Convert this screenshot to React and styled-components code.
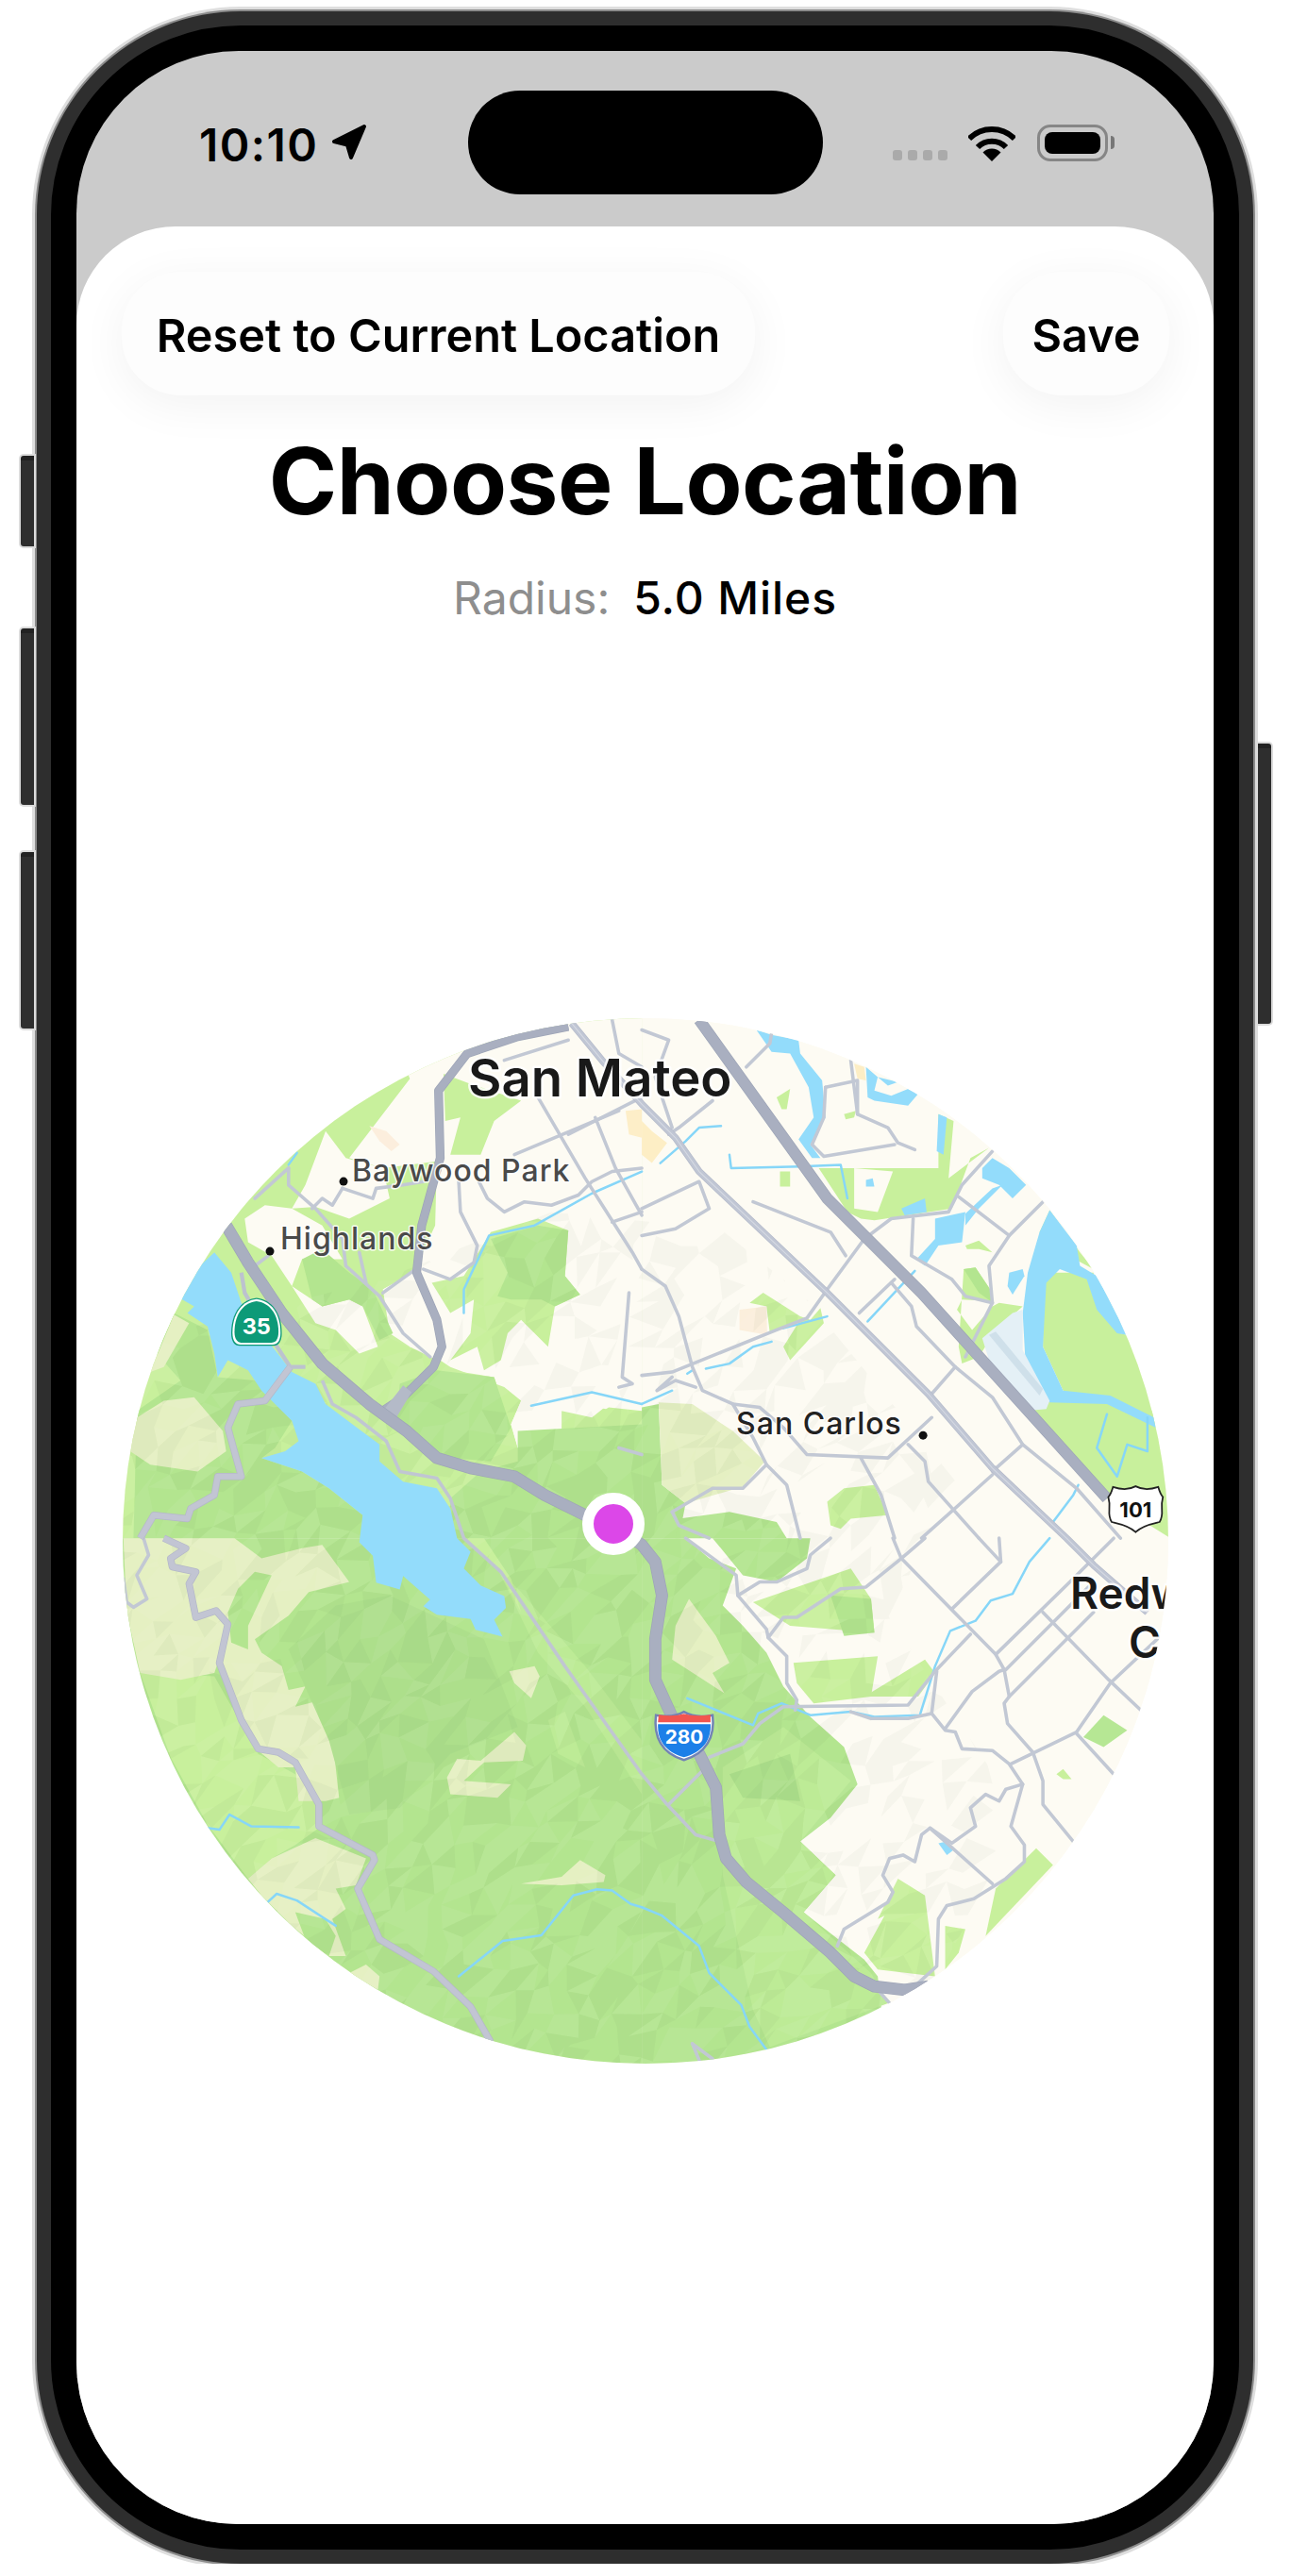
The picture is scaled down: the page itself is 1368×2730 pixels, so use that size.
import React from 'react'
import styled, { createGlobalStyle } from 'styled-components'

const GlobalStyle = createGlobalStyle`
  html, body {
    margin: 0;
    padding: 0;
    background: #fff;
    font-family: Inter, "Liberation Sans", sans-serif;
  }
`

const Device = styled.div`
  position: relative;
  width: 1289px;
  height: 2705px;
  margin: 12px 0 0 39px;
`

const Frame = styled.div`
  box-sizing: border-box;
  width: 100%;
  height: 100%;
  padding: 27px;
  background: #000;
  border: 15px solid #2e2e2e;
  border-radius: 216px;
  box-shadow: 0 0 0 2px #8c8c8c, 0 0 0 5px #dedede;
`

const SideButton = styled.div`
  position: absolute;
  top: ${p => p.$top}px;
  ${p => (p.$right ? 'right: -19px;' : 'left: -17px;')}
  width: 14px;
  height: ${p => p.$height}px;
  background: #2e2e2e;
  border-top: 5px solid #222;
  border-radius: ${p => (p.$right ? '0 3px 3px 0' : '3px 0 0 3px')};
  box-shadow: 0 0 0 2px #dcdcdc;
`

const Screen = styled.div`
  display: flex;
  flex-direction: column;
  height: 100%;
  overflow: hidden;
  background: #cbcbcb;
  border-radius: 172px;
`

const StatusBar = styled.div`
  box-sizing: border-box;
  display: grid;
  grid-template-columns: 1fr 376px 1fr;
  flex: 0 0 186px;
  padding-top: 42px;
`

const Island = styled.div`
  height: 110px;
  background: #000;
  border-radius: 55px;
`

const StatusLeft = styled.div`
  display: flex;
  align-items: flex-start;
  gap: 14px;
  padding: 35px 0 0 130px;
`

const Time = styled.span`
  font-size: 48px;
  line-height: 46px;
  font-weight: 600;
  letter-spacing: 1.4px;
  color: #000;
`

const StatusRight = styled.div`
  display: flex;
  align-items: flex-end;
  height: 75px;
  padding-left: 74px;
`

const SignalDots = styled.div`
  display: flex;
  gap: 6px;
  margin-right: 22px;
  margin-bottom: 1px;
`

const SignalDot = styled.span`
  width: 10px;
  height: 11px;
  background: #aaa;
  border-radius: 3px;
`

const Battery = styled.div`
  position: relative;
  box-sizing: border-box;
  width: 75px;
  height: 39px;
  margin-left: 23px;
  padding: 5px;
  border: 3px solid #868686;
  border-radius: 14px;
`

const BatteryFill = styled.div`
  height: 100%;
  background: #000;
  border-radius: 8px;
`

const BatteryNub = styled.div`
  position: absolute;
  top: 9px;
  right: -10px;
  width: 4px;
  height: 14px;
  background: #777;
  border-radius: 0 4px 4px 0;
`

const Sheet = styled.div`
  flex: 1;
  display: flex;
  flex-direction: column;
  align-items: center;
  background: #fff;
  border-radius: 105px 105px 0 0;
`

const ActionRow = styled.div`
  box-sizing: border-box;
  display: flex;
  justify-content: space-between;
  width: 100%;
  padding: 48px 47px 0 48px;
`

const PillButton = styled.div`
  display: flex;
  align-items: center;
  justify-content: center;
  box-sizing: border-box;
  width: ${p => p.$width}px;
  height: 131px;
  padding-top: 3px;
  font-size: 48.6px;
  font-weight: 600;
  color: #000;
  background: #fdfdfd;
  border-radius: 62px;
  box-shadow: 0 10px 50px rgba(0, 0, 0, 0.055);
`

const Title = styled.h1`
  margin: 36px 0 0;
  font-size: 98px;
  line-height: 110px;
  font-weight: 700;
  letter-spacing: -0.5px;
  color: #000;
`

const RadiusRow = styled.div`
  display: flex;
  gap: 25px;
  margin-top: 41px;
  font-size: 48px;
  line-height: 56px;
`

const RadiusLabel = styled.span`
  font-weight: 400;
  color: #8e8e8e;
`

const RadiusValue = styled.span`
  font-weight: 500;
  letter-spacing: 0.9px;
  color: #000;
`

const MapCircle = styled.div`
  position: relative;
  flex: 0 0 auto;
  width: 1108px;
  height: 1108px;
  margin-top: 417px;
  overflow: hidden;
  background: #fdfbf3;
  border-radius: 50%;
`

const MapSvg = styled.svg`
  display: block;
  width: 100%;
  height: 100%;
`

const Pin = styled.div`
  position: absolute;
  left: 487px;
  top: 503px;
  box-sizing: border-box;
  width: 66px;
  height: 66px;
  background: #dc47e8;
  border: 12px solid #fff;
  border-radius: 50%;
`

const PlaceLabel = styled.text`
  font-family: Inter, "Liberation Sans", sans-serif;
  font-size: ${p => p.$size}px;
  font-weight: ${p => p.$weight || 500};
  letter-spacing: ${p => p.$spacing || 0}px;
  fill: ${p => p.$color};
  stroke: rgba(255, 255, 255, 0.85);
  stroke-width: ${p => p.$halo || 3}px;
  stroke-linejoin: round;
  paint-order: stroke;
`

const ShieldNumber = styled.text`
  font-family: Inter, "Liberation Sans", sans-serif;
  font-size: ${p => p.$size}px;
  font-weight: 700;
  text-anchor: middle;
  fill: ${p => p.$color};
`

const G1 = '#c8f09c'
const MID = '#bdeb96'
const G2 = '#b3e58f'
const G3 = '#addf8b'
const PALE = '#e5f0c2'
const CREAM = '#fdfbf3'
const WATER = '#93dcfb'

const OFFSET = { a: [0, 0], b: [1568, 0], c: [0, 1568], d: [1568, 1568] }

// everything below is in zoom units, 2.8 per page pixel, one 1568 square per map quarter
const land = {
  a: [
    [G1, '0 0 1568 0 1568 1568 0 1568'],
    [CREAM, '800 0 1568 0 1568 1190 1470 1180 1420 1210 1480 1350 1400 1300 1330 1280 1200 1300 1180 1230 1210 1160 1160 1120 1000 1060 940 1020 880 1000 800 830 890 780 955 640 960 450 800 470 700 440 880 205'],
    [CREAM, '630 360 690 440 800 470 820 560 700 620 600 585 530 590 570 520'],
    [CREAM, '390 620 450 580 530 590 620 640 680 740 560 740 530 820 470 730 400 690'],
    [CREAM, '530 820 620 880 700 860 740 880 785 1000 730 1020 660 950 600 930'],
    [CREAM, '800 830 890 780 940 810 985 950 960 1040 880 1000 820 960'],
    [G1, '980 190 1060 220 1210 270 1130 330 1090 430 1000 430 1030 320 985 330'],
    [G1, '945 810 1040 790 1120 660 1260 620 1350 655 1340 790 1385 845 1310 880 1290 1000 1210 920 1170 960 1150 1040 1100 1070 1080 1000 1000 1040 1060 960 1070 860 1000 900'],
    [G1, '940 1060 1130 1090 1180 1240 1200 1300 1330 1280 1330 1190 1440 1180 1568 1210 1568 1568 800 1568 800 1100'],
    [CREAM, '1180 1110 1500 1060 1568 1080 1568 1130 1470 1170 1420 1210 1330 1190 1330 1280 1200 1300 1180 1230 1210 1160'],
    [G2, '560 740 620 710 700 780 770 830 830 960 790 980 740 880 700 860 620 880 590 860'],
    [G2, '1120 680 1260 640 1350 655 1340 790 1385 845 1310 880 1270 860 1180 860 1140 850 1170 780'],
    [G2, '850 1110 960 1070 1130 1090 1180 1240 1120 1340 1000 1330 900 1280 840 1220'],
    [G2, '70 1190 200 1100 110 1000 180 900 280 950 310 1090 420 1100 530 1220 480 1300 440 1330 560 1370 640 1420 740 1500 740 1568 60 1568'],
    [PALE, '55 1220 150 1160 240 1150 325 1250 335 1310 250 1370 110 1350 50 1310'],
    [PALE, '110 1075 180 905 225 930 150 1060'],
    [G2, '1200 1250 1568 1230 1568 1568 1000 1568 1000 1450 1090 1370 1200 1340'],
    ['#fceedd', '760 345 810 360 850 400 825 420 790 390'],
    ['#fdeec8', '1520 300 1568 295 1568 380 1530 370']
  ],
  b: [
    [G1, '525 470 880 470 880 310 925 330 910 500 1030 410 975 440 920 590 690 625 650 620 610 600'],
    [CREAM, '630 470 745 480 700 600 630 590'],
    [G1, '1130 1150 1380 1140 1568 1210 1568 1568 1380 1450'],
    [G1, '1190 780 1340 780 1350 880 1420 960 1568 1000 1568 1250 1250 1130 1190 1000'],
    [G1, '1180 660 1210 595 1300 720 1340 770 1190 690'],
    [G1, '955 770 990 765 1040 840 1040 865 950 860 935 890 980 950 1040 880 1060 870 1130 880 1050 950 1000 1030 950 1050 940 1000'],
    [G2, '955 770 990 765 1040 840 1035 865 1000 840'],
    [G1, '400 260 440 235 430 295 415 295'],
    [G1, '410 480 440 480 440 525 410 525'],
    [G1, '600 310 635 300 630 320 605 325'],
    [G1, '960 700 1000 685 1040 720 1000 710 965 710'],
    [G1, '320 870 360 840 470 910 500 920 530 885 540 930 440 1040 420 1000 470 920 380 960 370 880'],
    ['#fbefdc', '290 890 370 880 372 965 290 950'],
    ['#fdeec5', '0 330 30 360 75 395 30 455 0 430'],
    ['#fdeec5', '630 160 660 170 665 210 640 205'],
    [G2, '0 1180 50 1170 60 1410 130 1465 110 1568 0 1568'],
    [PALE, '50 1165 150 1170 270 1250 365 1340 300 1415 130 1465 60 1410'],
    [G2, '110 1510 260 1490 400 1520 430 1568 100 1568'],
    [G1, '550 1460 600 1420 690 1410 730 1500 620 1510 590 1540 560 1530']
  ],
  c: [
    [G2, '0 0 1568 0 1568 1568 0 1568'],
    [MID, '1140 90 1260 340 1400 500 1568 760 1568 600 1400 380 1210 160'],
    [MID, '1290 540 1340 515 1400 680 1320 640'],
    [G1, '660 0 1040 0 1140 90 1210 220 1180 120 1100 0'],
    [G1, '80 400 300 410 430 640 540 700 610 800 610 860 540 910 470 950 400 1010 280 850 170 650'],
    [PALE, '30 0 360 0 440 60 560 30 620 20 700 130 580 160 520 230 420 300 440 340 500 380 520 450 570 440 540 500 620 480 660 520 650 590 670 770 630 780 550 780 540 680 490 680 430 630 350 450 310 370 300 400 200 420 80 400 40 220'],
    [G2, '340 220 370 150 420 100 470 110 400 260 400 330 350 310'],
    [PALE, '470 950 600 890 750 950 720 1030 660 1040 690 1100 650 1130 690 1240 640 1240 530 1150 440 1060 400 1010'],
    [G2, '540 1110 630 1130 660 1180 640 1240 570 1190'],
    [PALE, '700 1290 750 1265 790 1300 785 1340'],
    [PALE, '1175 395 1250 380 1265 410 1240 475 1190 430'],
    [PALE, '990 710 1020 655 1090 660 1190 575 1225 615 1215 660 1100 665 1040 720 1180 730 1140 770 1000 760'],
    [PALE, '1210 1025 1330 1005 1385 955 1460 1000 1455 1020 1330 1030'],
    [G3, '660 200 820 170 1100 300 1200 560 1000 640 850 800 700 820 640 600 520 330']
  ],
  d: [
    [G2, '0 0 130 0 200 60 280 90 240 200 300 260 370 340 420 440 500 530 600 620 640 730 560 830 470 900 575 1000 480 1110 660 1250 700 1300 730 1568 0 1568'],
    [G2, '210 0 500 0 490 60 400 130 300 110'],
    [G1, '330 190 620 90 680 180 690 280 440 260'],
    [G2, '560 170 680 180 690 280 600 290'],
    [G1, '450 370 700 350 680 470 510 490 460 430'],
    [MID, '240 680 420 560 620 720 470 900 575 1000 480 1110 680 1290 730 1380 380 1510 330 1400 240 1000'],
    [G3, '260 700 440 640 470 780 300 770'],
    [G1, '760 1010 840 1060 870 1300 700 1280 660 1230 720 1120 700 1130'],
    [G1, '1050 1040 1170 920 1220 970 1020 1180'],
    [G1, '840 360 870 400 820 470 660 470'],
    ['#b6e794', '1310 590 1370 525 1440 570 1370 620'],
    [G1, '1230 700 1250 685 1275 715 1250 715'],
    [G1, '900 1150 960 1160 940 1230 900 1280'],
    [PALE, '100 260 140 180 220 290 260 370 210 400 245 460 90 360']
  ]
}

const water = {
  a: [
    [WATER, '300 720 350 780 380 870 440 960 480 1010 530 1075 600 1110 630 1170 710 1230 790 1290 790 1340 860 1400 960 1420 1000 1480 1020 1568 1060 1608 1040 1658 1090 1708 1160 1740 1165 1775 1130 1810 1155 1860 1075 1840 1060 1808 960 1795 920 1770 940 1750 860 1680 850 1720 780 1700 770 1620 730 1580 740 1500 640 1420 560 1370 440 1330 510 1310 550 1280 530 1220 480 1170 440 1130 400 1070 340 1040 310 1090 300 1020 280 940 220 900 240 880 205 860 150 860']
  ],
  b: [
    [WATER, '340 60 385 75 465 90 470 130 535 210 545 320 500 400 530 440 505 440 465 385 510 320 495 230 440 130 385 125'],
    [WATER, '665 170 700 200 690 240 740 255 790 235 820 250 790 285 690 270 670 260'],
    [WATER, '700 200 760 215 730 225'],
    [WATER, '870 620 960 600 950 690 880 700 840 760 815 740 870 680'],
    [WATER, '960 605 1040 530 1070 520 1000 590 960 640'],
    [WATER, '1210 595 1290 700 1300 760 1350 790 1440 965 1410 960 1350 890 1320 800 1240 770 1200 810 1190 1000 1250 1130 1390 1145 1520 1210 1525 1240 1380 1170 1210 1165 1140 1080 1130 900 1145 780 1180 660'],
    [WATER, '1090 780 1130 770 1135 790 1100 845 1085 820'],
    [WATER, '1010 470 1040 440 1090 470 1140 520 1100 560 1060 520 1010 500'],
    [WATER, '665 505 685 500 690 525 665 525'],
    [WATER, '770 590 840 560 845 600 780 610'],
    [WATER, '880 310 905 320 895 430 875 420']
  ],
  d: [[WATER, '880 905 905 900 925 925 905 940']]
}

const rivers = {
  a: [
    '1040 900 1040 830 1115 670 1250 640 1420 545 1568 480',
    '1240 1175 1420 1135 1568 1170',
    '545 425 520 460'
  ],
  b: [
    '260 430 265 470 470 465 590 460 610 560',
    '55 455 130 390 170 350 235 345',
    '670 925 810 775',
    '190 1065 260 1050 330 1000 385 985',
    '135 1080 150 1070',
    '420 945 550 910',
    '0 1170 90 1130',
    '1380 1200 1350 1300 1410 1385 1440 1290 1500 1310 1500 1210',
    '1295 1410 1280 1440 1220 1520'
  ],
  c: [
    '280 860 315 865 345 820 410 855 550 858',
    '458 1080 485 1055 545 1075 660 1150',
    '1025 1300 1155 1195 1270 1178 1365 1060 1435 1042 1480 1045 1535 1085 1568 1095'
  ],
  d: [
    '135 475 330 555 345 520 415 490 500 525 620 515 690 530 825 525 870 380 915 275 990 245 1035 185 1100 165 1150 70 1210 0',
    '0 1095 60 1120 170 1210 200 1290 295 1385 320 1450 370 1518'
  ]
}

const minorRoads = {
  a: [
    '1160 150 1350 90',
    '1350 370 1568 260',
    '1260 260 1400 500 1540 720 1568 770',
    '1480 30 1500 130 1568 170',
    '1190 430 1500 300',
    '1430 320 1490 470 1568 610',
    '1480 630 1568 600',
    '1568 470 1480 480 1420 510 1380 550 1300 580 1220 570 1160 600 1110 560 1085 510',
    '1025 510 1030 600 1080 700 1070 750 1000 800 920 770',
    '800 840 890 775',
    '520 470 520 520 600 590 680 680 690 760 790 850 860 960 940 1030',
    '520 470 420 560',
    '730 720 750 810',
    '680 530 650 580 620 560 590 590',
    '680 530 770 560 780 530 860 520 920 510',
    '460 730 420 760',
    '1530 840 1510 1090 1540 1110 1500 1120',
    '1568 1320 1500 1300'
  ],
  b: [
    '0 60 80 90 40 200 90 350',
    '210 270 110 350 80 370',
    '310 170 380 100 385 70',
    '545 230 640 210 640 310 730 350 760 395 810 415',
    '545 230 540 320 505 400 540 435 750 400',
    '620 150 640 310',
    '0 590 170 510 200 590 100 650 0 670',
    '330 570 560 660 605 730',
    '0 770 70 820 110 910 150 1060 180 1130 270 1170 350 1180 420 1240 490 1320 730 1330 860 1210',
    '0 1085 90 1075 400 950 490 915 550 830 660 680 740 620 910 600 950 520 1040 420',
    '805 620 800 730 920 800 960 850 1040 870 980 990 960 1030',
    '1040 870 1030 760 1090 670 1190 570',
    '940 555 1090 670',
    '645 900 750 800',
    '740 810 800 880 815 940 930 1060 1040 1150 1130 1290 1290 1420 1420 1568',
    '860 1140 930 1060',
    '1040 1370 1130 1290',
    '830 1568 1040 1380',
    '90 1490 210 1420 300 1420 370 1350 330 1270 270 1170',
    '650 1330 710 1440 750 1568',
    '790 1290 840 1340 850 1400 1000 1568',
    '370 1350 430 1410 470 1568',
    '90 1090 45 1130 100 1100 160 1120',
    '90 1490 110 1530 200 1568'
  ],
  c: [
    '90 0 105 50 70 110 100 180 60 205 40 190 30 120',
    '745 1568 800 1568'
  ],
  d: [
    '130 0 280 110 285 170 370 270 375 295 430 350 430 430 460 480 455 510',
    '285 170 350 130 400 130 490 90 500 50 560 0',
    '375 295 420 235 460 235 590 150 665 145 770 60 840 0',
    '745 0 770 60 1050 345 1075 390 1090 470 1075 490 1085 550 1160 635 1190 720 1190 790 1280 900',
    '1050 345 1270 130 1400 0',
    '920 210 1065 70 1060 0',
    '1065 70 1000 0',
    '870 395 975 285',
    '875 395 860 520 900 570 930 575 950 625 1040 630 1090 670 1130 730 1095 855 1135 910 1135 960 1080 1010 985 1070 905 1090 880 1130 875 1270 820 1320',
    '900 565 980 455 1060 395 1075 390',
    '80 790 190 680',
    '200 650 300 610 350 550 420 500 790 495 870 395',
    '620 515 680 535 790 535 860 520',
    '1095 670 1290 575 1390 430 1550 280',
    '1290 580 1400 700',
    '1090 470 1340 220',
    '1190 220 1385 420 1480 510',
    '1080 390 1220 250 1340 130',
    '1130 730 1080 745 1060 780 1020 760 975 800 990 855 920 905 855 860 830 880 810 960 775 940 735 950 715 1000 745 1050 730 1080 600 1160 580 1210',
    '855 860 1040 1025',
    '700 1340 740 1385',
    '150 1500 210 1545',
    '150 1500 175 1560'
  ]
}

// these run over the quarter lines, so they are written in one coordinate space
const frontageRoad = '620 1100 650 1170 720 1210 810 1280 850 1370 960 1390 1000 1450 1040 1568 1150 1668 1340 1948 1568 2268 1643 2358 1728 2448 1798 2468'
const skyline = '525 1060 450 1160 370 1170 340 1240 380 1385 310 1385 300 1440 230 1480 220 1510 120 1500 80 1568 M150 1568 215 1598 170 1628 175 1653 245 1668 225 1703 245 1803 305 1783 340 1823 315 1938 380 2108 430 2193 490 2203 540 2233 610 2358 610 2423 770 2508 775 2523 725 2608 790 2758 950 2853 1060 2958 1120 3063'
const lakeRoad = '380 780 390 840 460 960 525 1060 570 1060'
const elCamino = '1360 40 1450 150 1568 280 1668 380 1738 480 2118 840 2418 1140 2608 1360 2828 1568 2908 1648 3068 1788'
const upperHighway = '1350 50 1200 80 1050 130 965 240 970 440 915 640 900 780 960 920 975 1000 950 1060 860 1150 800 1190'
const highway280 = '335 640 400 750 500 900 620 1050 760 1170 870 1250 960 1330 1060 1360 1190 1385 1280 1440 1400 1500 1500 1540 1568 1588 1608 1638 1628 1738 1608 1868 1608 1988 1658 2098 1738 2208 1788 2308 1798 2448 1818 2518 1878 2588 1988 2678 2128 2798 2198 2868 2258 2898 2348 2908 2418 2898'
const highway101 = '1738 30 2118 560 2398 840 2948 1450'

function hash (n) {
  const s = Math.sin(n * 127.1) * 43758.5453
  return s - Math.floor(s)
}

// low-poly hill shading, a jittered triangle mesh sorted into three tone buckets
function buildShade () {
  const cell = 62
  const paths = ['', '', '']
  const vertex = (i, j) => [
    i * cell + (hash(i * 91 + j) - 0.5) * cell * 0.8,
    j * cell + (hash(i + j * 57 + 3) - 0.5) * cell * 0.8
  ]
  for (let i = 0; i < 52; i++) {
    for (let j = 0; j < 52; j++) {
      const a = vertex(i, j)
      const b = vertex(i + 1, j)
      const c = vertex(i, j + 1)
      const d = vertex(i + 1, j + 1)
      const tri = (p, q, r) => `M${p[0].toFixed(0)} ${p[1].toFixed(0)}L${q[0].toFixed(0)} ${q[1].toFixed(0)}L${r[0].toFixed(0)} ${r[1].toFixed(0)}Z`
      paths[Math.floor(hash(i * 13 + j * 7 + 1) * 3)] += tri(a, b, c)
      paths[Math.floor(hash(i * 17 + j * 11 + 2) * 3)] += tri(b, d, c)
    }
  }
  return paths
}

const shade = buildShade()

function Polys ({ set }) {
  return Object.keys(set).map(key => (
    <g key={key} transform={`translate(${OFFSET[key][0]} ${OFFSET[key][1]})`}>
      {set[key].map(([color, points], i) => (
        <polygon key={i} points={points} fill={color} />
      ))}
    </g>
  ))
}

function Lines ({ set, color, width }) {
  return Object.keys(set).map(key => (
    <g key={key} transform={`translate(${OFFSET[key][0]} ${OFFSET[key][1]})`} fill='none' stroke={color} strokeWidth={width} strokeLinejoin='round' strokeLinecap='round'>
      {set[key].map((points, i) => (
        <polyline key={i} points={points} />
      ))}
    </g>
  ))
}

function Road ({ points, color, edge, width }) {
  return (
    <g fill='none' strokeLinejoin='round'>
      {edge && <path d={`M${points}`} stroke={edge} strokeWidth={width + 4} />}
      <path d={`M${points}`} stroke={color} strokeWidth={width} />
    </g>
  )
}

function Shield35 () {
  const arch = 'M350 960C350 900 380 860 425 855C470 860 500 900 500 960C500 985 490 997 475 997L375 997C360 997 350 985 350 960Z'
  return (
    <g>
      <path d={arch} fill='#0d9a78' />
      <path d={arch} fill='#fff' transform='translate(425 930) scale(.95) translate(-425 -930)' />
      <path d={arch} fill='#0d9a78' transform='translate(425 930) scale(.87) translate(-425 -930)' />
      <ShieldNumber x='425' y='964' $size={66} $color='#fff'>35</ShieldNumber>
    </g>
  )
}

function Shield280 () {
  const outline = 'M42 525C70 530 100 530 125 515C150 530 185 530 210 525C218 590 190 640 125 658C60 640 34 590 42 525Z'
  return (
    <g>
      <path d={outline} fill='#fff' stroke='#7283b5' strokeWidth='7' />
      <path d='M50 524C80 528 105 527 125 521C145 527 175 528 204 524L204 546L48 546Z' fill='#f2554f' />
      <path d='M48 552L204 552C206 600 180 635 125 650C70 635 46 600 48 552Z' fill='#1c7fe8' />
      <ShieldNumber x='126' y='610' $size={58} $color='#fff'>280</ShieldNumber>
    </g>
  )
}

function Shield101 () {
  const outline = 'M1398 1416C1425 1425 1445 1425 1465 1414C1485 1425 1505 1425 1532 1416C1536 1430 1540 1440 1546 1446C1536 1480 1552 1495 1536 1520C1515 1525 1485 1530 1465 1550C1445 1530 1415 1525 1394 1520C1378 1495 1394 1480 1384 1446C1390 1440 1394 1430 1398 1416Z'
  return (
    <g>
      <path d={outline} fill='#fff' stroke='#222' strokeWidth='5' />
      <ShieldNumber x='1465' y='1506' $size={62} $color='#111'>101</ShieldNumber>
    </g>
  )
}

function MapArt () {
  return (
    <MapSvg viewBox='28 25 3102 3102'>
      <defs>
        <clipPath id='hills'>
          <polygon points='0 1000 800 800 1300 600 1800 650 2050 850 2500 1400 2300 1800 2700 2400 2300 3136 0 3136' />
        </clipPath>
      </defs>
      <rect x='0' y='0' width='3200' height='3200' fill={CREAM} />
      <Polys set={land} />
      <g clipPath='url(#hills)'>
        <path d={shade[0]} fill='rgba(70, 95, 50, 0.035)' />
        <path d={shade[1]} fill='rgba(255, 255, 255, 0.06)' />
      </g>
      <Polys set={water} />
      <g transform='translate(1568 0)'>
        <polygon points='1010 975 1100 900 1130 890 1130 1010 1210 1160 1200 1185 1140 1190 1030 1040' fill='#e4f0f6' />
        <polygon points='1030 965 1050 955 1190 1125 1180 1145' fill='#cfe0ea' />
      </g>
      <Lines set={rivers} color='#86d6f8' width={7} />
      <Lines set={minorRoads} color='#c2c8d4' width={10} />
      <Road points={frontageRoad} color='#c0c6d2' width={10} />
      <Road points={lakeRoad} color='#bcc2cf' width={12} />
      <Road points={skyline} color='#c2c5d3' edge='#b4b8c8' width={17} />
      <Road points={elCamino} color='#c0c6d4' edge='#b6bccb' width={17} />
      <Road points={elCamino} color='#d6dae3' width={3} />
      <Road points={upperHighway} color='#a9afc0' edge='#9ea5b7' width={22} />
      <polygon points='800 1190 860 1115 885 1135 840 1210 780 1175' fill='#b4bac8' />
      <Road points={highway101} color='#a9afc0' edge='#9ea5b7' width={30} />
      <Road points={highway280} color='#a9afc0' edge='#9ea5b7' width={32} />
      <Shield35 />
      <g transform='translate(1568 0)'><Shield101 /></g>
      <g transform='translate(1568 1568)'><Shield280 /></g>
      <g transform='translate(-336 -2996) scale(2.8)'>
        <circle cx='364' cy='1252' r='4.5' fill='#111' />
        <circle cx='286' cy='1326' r='4.5' fill='#111' />
        <circle cx='978' cy='1521' r='4.5' fill='#111' />
        <PlaceLabel x='496' y='1162' $size={54.5} $weight={600} $color='#191919' $halo={5}>San Mateo</PlaceLabel>
        <PlaceLabel x='373' y='1252' $size={32} $spacing={1} $color='#4a4a4a'>Baywood Park</PlaceLabel>
        <PlaceLabel x='297' y='1324' $size={32} $spacing={1} $color='#4a4a4a'>Highlands</PlaceLabel>
        <PlaceLabel x='780' y='1520' $size={32} $spacing={1} $color='#222'>San Carlos</PlaceLabel>
        <PlaceLabel x='1134' y='1705' $size={46} $weight={600} $color='#191919' $halo={5}>Redwood</PlaceLabel>
        <PlaceLabel x='1196' y='1757' $size={46} $weight={600} $color='#191919' $halo={5}>City</PlaceLabel>
      </g>
    </MapSvg>
  )
}

function LocationArrow () {
  return (
    <svg width='38' height='39' viewBox='0 0 38 39'>
      <path d='M35 3L3 19L17 22.5L21 36Z' fill='#000' stroke='#000' strokeWidth='4' strokeLinejoin='round' />
    </svg>
  )
}

function Wifi () {
  return (
    <svg width='50' height='37' viewBox='0 0 50 37'>
      <g fill='none' stroke='#000' strokeWidth='6'>
        <path d='M1 13A34 34 0 0 1 49 13' />
        <path d='M10 22A21 21 0 0 1 40 22' />
      </g>
      <path d='M25 37L15.5 27.5A13.5 13.5 0 0 1 34.5 27.5Z' fill='#000' />
    </svg>
  )
}

export default function App () {
  return (
    <>
      <GlobalStyle />
      <Device>
        <SideButton $top={471} $height={91} />
        <SideButton $top={654} $height={182} />
        <SideButton $top={891} $height={182} />
        <SideButton $right $top={776} $height={292} />
        <Frame>
          <Screen>
            <StatusBar>
              <StatusLeft>
                <Time>10:10</Time>
                <LocationArrow />
              </StatusLeft>
              <Island />
              <StatusRight>
                <SignalDots>
                  {[0, 1, 2, 3].map(i => <SignalDot key={i} />)}
                </SignalDots>
                <Wifi />
                <Battery>
                  <BatteryFill />
                  <BatteryNub />
                </Battery>
              </StatusRight>
            </StatusBar>
            <Sheet>
              <ActionRow>
                <PillButton $width={671}>Reset to Current Location</PillButton>
                <PillButton $width={176}>Save</PillButton>
              </ActionRow>
              <Title>Choose Location</Title>
              <RadiusRow>
                <RadiusLabel>Radius:</RadiusLabel>
                <RadiusValue>5.0 Miles</RadiusValue>
              </RadiusRow>
              <MapCircle>
                <MapArt />
                <Pin />
              </MapCircle>
            </Sheet>
          </Screen>
        </Frame>
      </Device>
    </>
  )
}
